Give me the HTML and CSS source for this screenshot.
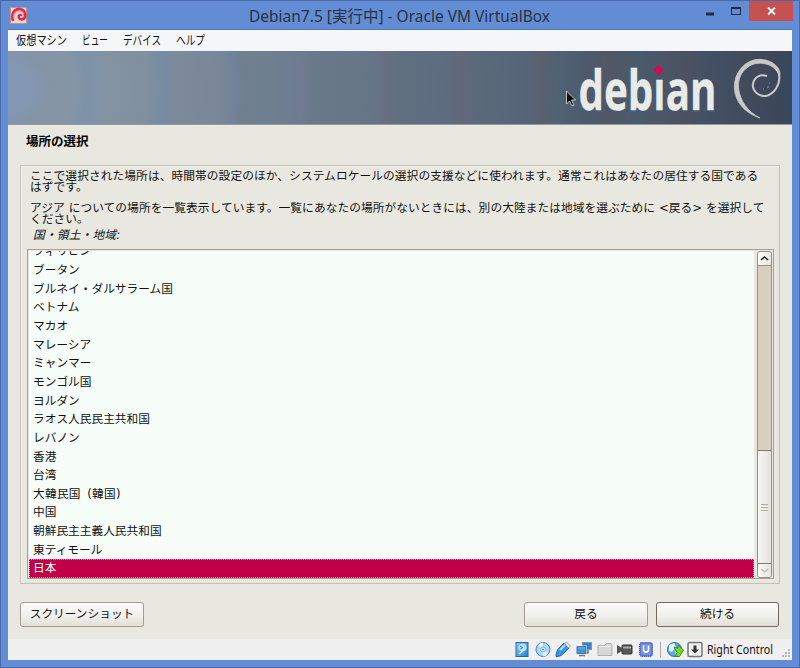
FILE: index.html
```html
<!DOCTYPE html>
<html lang="ja">
<head>
<meta charset="utf-8">
<title>Debian7.5 [実行中] - Oracle VM VirtualBox</title>
<link rel="stylesheet" href="styles.css">
</head>
<body>
<div class="window">
  <header class="titlebar">
    <svg class="app-icon" width="17" height="17" viewBox="0 0 17 17"><rect x=".5" y=".5" width="16" height="16" fill="#ead8ce" stroke="#b39a9a"/><path d="M3 14C1 7 4 2 9 2c5 0 7 4 6 8-1 3-5 3-6 1-1-3 2-4 2-2" fill="none" stroke="#e52750" stroke-width="2.6"/><path d="M4 12C3 7 5 4 9 4c4 0 5 3 4 5" fill="none" stroke="#f37e91" stroke-width="1"/></svg>
    <svg class="title" width="302" height="24"><text x="0" y="18" textLength="301" lengthAdjust="spacingAndGlyphs">Debian7.5 [実行中] - Oracle VM VirtualBox</text></svg>
    <div class="controls">
      <svg class="min" width="8" height="20"><rect y="11.500" width="8" height="3" fill="#222b3b"/></svg>
      <svg class="max" width="10" height="20"><rect x=".5" y="6.500" width="9" height="7" fill="none" stroke="#222b3b"/><path d="M0 7h10" stroke="#222b3b" stroke-width="2"/></svg>
      <div class="close"><svg width="9" height="8" viewBox="0 0 9 8"><path d="M1 .5l7 7M8 .5l-7 7" stroke="#fff" stroke-width="1.8"/></svg></div>
    </div>
  </header>
  <main class="client">
    <nav class="menu">
      <svg width="52" height="18"><text x="0" y="14" textLength="51" lengthAdjust="spacingAndGlyphs">仮想マシン</text></svg>
      <svg width="27" height="18"><text x="0" y="14" textLength="26" lengthAdjust="spacingAndGlyphs">ビュー</text></svg>
      <svg width="39" height="18"><text x="0" y="14" textLength="38" lengthAdjust="spacingAndGlyphs">デバイス</text></svg>
      <svg width="30" height="18"><text x="0" y="14" textLength="29" lengthAdjust="spacingAndGlyphs">ヘルプ</text></svg>
    </nav>
    <div class="banner">
      <svg width="784" height="74" viewBox="8 51 784 74">
        <defs><clipPath id="stems"><path d="M570 51H651V78.500H667V51H730V125H570Z"/></clipPath></defs>
        <g clip-path="url(#stems)"><text class="wordmark" x="578.500" y="109.500" textLength="138" lengthAdjust="spacingAndGlyphs">debian</text></g>
        <path d="M658.500 65l5 5-5 5-5-5z" fill="#d70751"/>
        <path d="M760 118C748 114 738 106 735 93C732 78 740 64 754 60C767 57 780 65 780 74L779 76C777 69 771 65 766 64C758 62 752 64 748 67C741 72 738 79 738.500 88C740 101 748 112 760 118Z" fill="#c8c9ca" stroke="#c8c9ca" stroke-width=".8"/>
        <path d="M779 73C781 85 774 94 766 96C758 97 752 90 753 84C754 77 760 74 767 76" fill="none" stroke="#c8c9ca" stroke-width="2"/>
        <path d="M763 89h1M769 83h1M767 87h2" stroke="#92979f"/>
        <path d="M566.500 91v13l3-3 2.500 5 2-1-2.500-5h4z" fill="#080808" stroke="#e8e8e8" stroke-width=".8"/>
      </svg>
    </div>
    <section class="installer">
      <h1>場所の選択</h1>
      <div class="frame">
        <p>ここで選択された場所は、時間帯の設定のほか、システムロケールの選択の支援などに使われます。通常これはあなたの居住する国である<br>はずです。</p>
        <p class="second">アジア についての場所を一覧表示しています。一覧にあなたの場所がないときには、別の大陸または地域を選ぶために &lt;戻る&gt; を選択して<br>ください。</p>
        <div class="label">国・領土・地域:</div>
        <div class="listbox">
          <ul>
            <li>フィリピン</li><li>ブータン</li><li>ブルネイ・ダルサラーム国</li><li>ベトナム</li><li>マカオ</li><li>マレーシア</li><li>ミャンマー</li><li>モンゴル国</li><li>ヨルダン</li><li>ラオス人民民主共和国</li><li>レバノン</li><li>香港</li><li>台湾</li><li class="parens">大韓民国 (韓国)</li><li>中国</li><li>朝鮮民主主義人民共和国</li><li>東ティモール</li><li class="selected">日本</li>
          </ul>
          <div class="scrollbar">
            <div class="arrow"><svg width="7" height="5"><path d="M0 4l3.500-3L7 4" fill="none" stroke="#222" stroke-width="1.500"/></svg></div>
            <div class="trough"></div>
            <div class="thumb"><i></i><i></i><i></i></div>
            <div class="arrow down"><svg width="7" height="5"><path d="M0 1l3.500 3L7 1" fill="none" stroke="#bbb7ac" stroke-width="1.300"/></svg></div>
          </div>
        </div>
      </div>
      <div class="buttons">
        <div class="button shot">スクリーンショット</div>
        <div class="button">戻る</div>
        <div class="button default">続ける</div>
      </div>
    </section>
    <footer class="status">
      <svg width="16" height="17" viewBox="0 0 16 17"><defs><linearGradient id="b" x2="1" y2="1"><stop stop-color="#86cdf8"/><stop offset="1" stop-color="#2381d5"/></linearGradient></defs><rect x="2" y="1.500" width="12" height="14" fill="url(#b)" stroke="#2367af"/><ellipse cx="8.500" cy="6.500" rx="4" ry="3.800" fill="#b9e2fb"/><path d="M5 13l5-4" fill="none" stroke="#fff" stroke-width="1.500"/><path d="M6 5l3 1.500-3 1.500" fill="none" stroke="#3584cf"/></svg>
      <svg width="16" height="17" viewBox="0 0 16 17"><circle cx="8" cy="8.500" r="7" fill="#a7dcfa" stroke="#3a80c6"/><path d="M8 8.500L3 4.500a6 6 0 0 1 5-3zM8 8.500l5 4a6 6 0 0 1-5 3z" fill="#e9f8ff"/><circle cx="8" cy="8.500" r="2.500" fill="#fff" stroke="#77a9dc"/><circle cx="8" cy="8.500" r="1" fill="#507ec5"/></svg>
      <svg width="16" height="17" viewBox="0 0 16 17"><path d="M1 15.500C1 12 2 9 4.500 6.500L9 2l5 5-5 5C6 15 4 15.500 1 15.500z" fill="#3a97e4" stroke="#1c61aa"/><path d="M9.500 2.500l2-1.500 4 4-2 2z" fill="#eee" stroke="#888" stroke-width=".8"/><path d="M5 9l5-5" stroke="#b7e4ff" stroke-width="1.800"/></svg>
      <svg width="16" height="17" viewBox="0 0 16 17"><rect x="6.500" y="1.500" width="9" height="7" fill="#2c83d1" stroke="#8997a2"/><path d="M12 9v3h-2" fill="none" stroke="#777" stroke-width="1.500"/><rect x="1" y="5.500" width="9" height="7" fill="#3c96e1" stroke="#eef3f5" stroke-width="2"/><rect x="1" y="5.500" width="9" height="7" fill="#3c96e1" stroke="#5a7386"/><path d="M2 7h7" stroke="#72b8ef"/><path d="M3 14.500h6" stroke="#777" stroke-width="1.500"/></svg>
      <svg class="folder" width="16" height="17" viewBox="0 0 16 17"><path d="M1 4.500h7l1-2h5l1 2v10H1z" fill="#d7d7d7" stroke="#b0b0b0"/><path d="M2 5.500h12" stroke="#eee"/></svg>
      <svg width="16" height="17" viewBox="0 0 16 17"><rect x="5" y="4" width="10" height="9" rx="1" fill="#595959" stroke="#333"/><path d="M0 4l5 3v3l-5 3z" fill="#555"/><path d="M6 6.500h8" stroke="#aaa" stroke-width="2"/></svg>
      <svg width="16" height="17" viewBox="0 0 16 17"><rect x="1.500" y="1.500" width="13" height="14" rx="2" fill="#5a75d3" stroke="#4058b5" stroke-dasharray="1 1"/><rect x="3" y="3" width="10" height="11" fill="#7390e8"/><path d="M5.500 4.500v4c0 3.500 5 3.500 5 0v-4" fill="none" stroke="#fff" stroke-width="1.700"/></svg>
      <span class="divider"></span>
      <svg width="17" height="17" viewBox="0 0 17 17"><circle cx="7.500" cy="8.500" r="7" fill="#58a9e5" stroke="#2c6ba9"/><path d="M2 4l5-2 2 4-4 5-3-1zM8 9l3 2-2 4z" fill="#e1f3fc"/><path d="M7 6l4 1V4.500l5.500 4.500-4 6.500H8l2-4z" fill="#79d827" stroke="#398b18"/></svg>
      <svg class="host" width="16" height="17" viewBox="0 0 16 17"><rect x="1" y="1.500" width="14" height="14" rx="1.500" fill="#eee" stroke="#777" stroke-width="1.500"/><path d="M6.500 4.500h3v4H12l-4 4-4-4h2.500z" fill="#333"/></svg>
      <svg class="hostkey" width="67" height="17"><text x="0" y="13" textLength="66" lengthAdjust="spacingAndGlyphs">Right Control</text></svg>
      <svg class="grip" width="9" height="9"><path d="M6 1h2M3 4h2m1 0h2M0 7h2m1 0h2m1 0h2" stroke="#bbb" stroke-width="2"/></svg>
    </footer>
  </main>
</div>
</body>
</html>
```
FILE: styles.css
```css
* { box-sizing: border-box; }
body { margin: 0; font-family: "Noto Sans", "Noto Sans CJK JP", sans-serif; }
svg { display: block; flex: none; overflow: visible; }
.window { width: 800px; height: 668px; background: #628dd5; border: 1px solid #4769a7; display: flex; flex-direction: column; padding: 0 7px 7px; }
.titlebar { height: 29px; display: flex; align-items: flex-start; border-bottom: 1px solid #4f78ba; }
.app-icon { margin: 6px 0 0 2px; }
.title { margin: 3px 0 0 222px; font-family: "Noto Sans", "Noto Sans CJK JP", sans-serif; font-size: 15.5px; fill: #2a3142; }
.controls { display: flex; margin: 0 -1px 0 auto; height: 19px; }
.max { margin-left: 17px; }
.close { width: 44px; height: 20px; margin-left: 8px; background: #c75050; display: flex; align-items: center; justify-content: center; }
.client { flex: 1; display: flex; flex-direction: column; min-height: 0; }
.menu { height: 21px; background: #f5f6f7; display: flex; padding: 1px 0 0 8px; font-family: "Noto Sans CJK JP", sans-serif; font-size: 12.5px; fill: #111; }
.menu svg { margin-right: 14px; }
.banner { height: 74px; border-bottom: 1px solid #969a9d; background: radial-gradient(circle 784px at 0 50%, #8198b7 0, #8397b2 25px, #8494a5 40px, #8595a5 65px, #7f93a8 78px, #8093a8 92px, #8393a1 102px, #8090a0 140px, #788ca4 152px, #788ba2 160px, #7c8a9a 170px, #788698 215px, #71839a 228px, #70808f 235px, #6e7f8f 265px, #6f7b90 295px, #6a7989 305px, #667487 370px, #676f80 380px, #607081 392px, #5e6c7f 440px, #626778 455px, #5a6a7b 468px, #566477 520px, #5a606f 532px, #506273 548px, #4d5a6d 580px, #525765 600px, #495b6c 630px, #4c5262 675px, #435165 700px, #414a5b 740px, #394659 784px); }
.wordmark { font-family: "Open Sans", sans-serif; font-size: 56px; font-weight: 700; fill: #e8ebe8; stroke: #e8ebe8; stroke-width: .3px; }
.installer { flex: 1; min-height: 0; background: #e8e8e0; padding: 6px 12px 0; font-family: "DejaVu Sans", "Noto Sans CJK JP", sans-serif; font-size: 11.7px; color: #111; }
h1 { margin: 0 0 15px 6px; font-family: "Noto Sans CJK JP", sans-serif; font-size: 12.5px; line-height: 19px; font-weight: 700; color: #000; }
.frame { height: 419px; width: 760px; border: 1px solid #c5c1b4; box-shadow: inset 1px 1px #f2f2ed; padding: 5px 6px 0; }
p { height: 22px; margin: 0 0 10px 3px; line-height: 11px; white-space: nowrap; letter-spacing: .1px; }
.second { letter-spacing: .08px; }
.label { height: 14px; margin: -7px 0 0 6px; font-style: italic; line-height: 14px; letter-spacing: .2px; }
.listbox { height: 330px; width: 747px; margin-top: 7px; border: 1px solid #a79f91; display: flex; justify-content: space-between; overflow: hidden; background: #e8e8e0; padding: 1px 1px 0; }
ul { margin: 0; padding: 0; list-style: none; width: 725px; background: #f7fdf9; display: flex; flex-direction: column; justify-content: flex-end; overflow: hidden; }
li { height: 18.65px; line-height: 18px; padding-left: 4px; flex: none; }
.parens { letter-spacing: .25px; word-spacing: 2.5px; }
.selected { background: #c20048; color: #fff; border: 1px dotted #e59ab7; line-height: 16px; padding-left: 3px; }
.scrollbar { width: 15px; border: 1px solid #9a9082; border-radius: 3px; background: #d8cfc1; display: flex; flex-direction: column; overflow: hidden; }
.arrow { height: 14px; flex: none; border-bottom: 1px solid #9a9082; background: linear-gradient(90deg, #fbfbf8, #e6e4dd); display: flex; align-items: center; justify-content: center; }
.trough { flex: 1; }
.thumb { height: 113px; border-top: 1px solid #817970; background: linear-gradient(90deg, #f7f7f4, #e3e1da); display: flex; flex-direction: column; align-items: center; justify-content: center; gap: 2px; }
.thumb i { width: 7px; height: 1px; background: #b4afa3; }
.down { border-top: 1px solid #817970; border-bottom: 0; }
.buttons { display: flex; margin-top: 18px; }
.button { width: 124px; height: 25px; border: 1px solid #a89b8e; border-radius: 3px; background: linear-gradient(#fbfcf9, #efefeb 60%, #e3dfd7); text-align: center; line-height: 22px; }
.shot { margin-right: 380px; }
.default { width: 123px; margin-left: 8px; border-color: #71685f; }
.status { height: 21px; background: #f0f0f0; display: flex; align-items: center; padding-left: 506px; gap: 4.7px; }
.divider { width: 1px; height: 16px; background: #aaa; margin: 0 1px; }
.host { margin-left: -1px; }
.hostkey { font-family: "Noto Sans", sans-serif; font-size: 12px; fill: #111; margin-left: -1px; }
.grip { margin: 8px 0 0 3px; }
```
